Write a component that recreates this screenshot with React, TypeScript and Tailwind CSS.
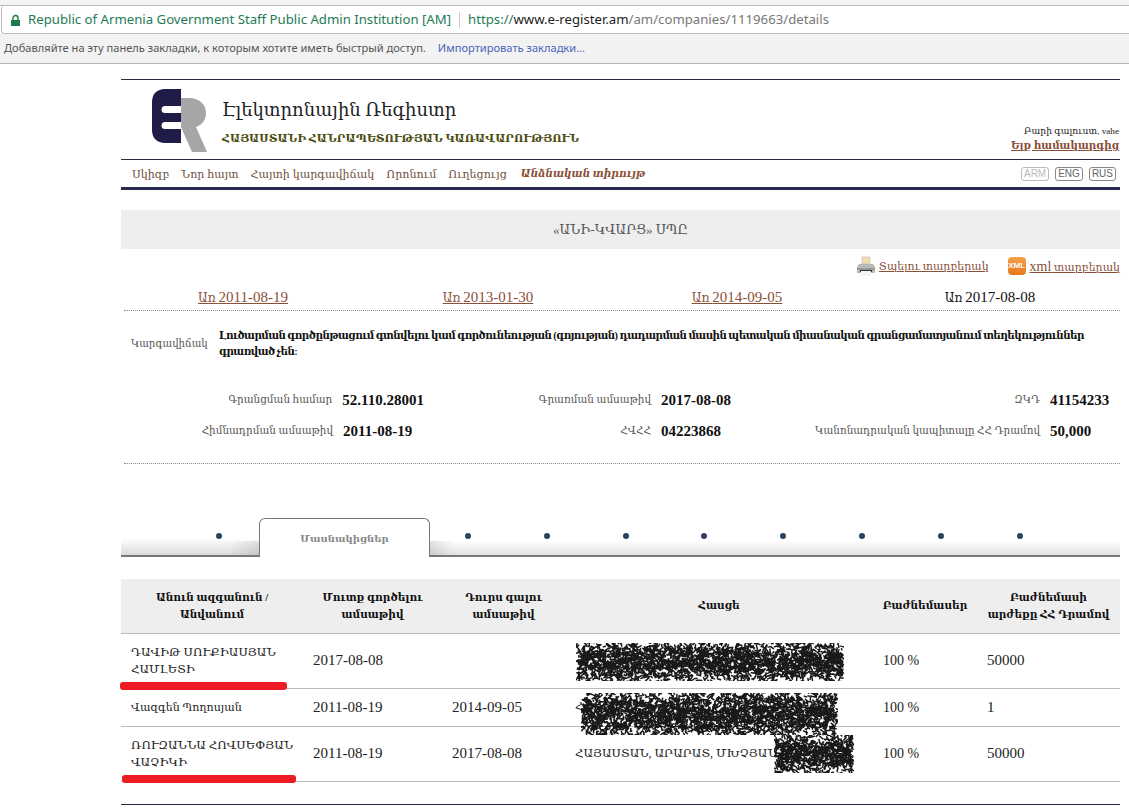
import React from "react";

const serif = "font-['Liberation_Serif','DejaVu_Serif',serif]";

function Scribble({ w, h, seed }: { w: number; h: number; seed: number }) {
  let s = seed;
  const r = () => {
    s = (s * 16807) % 2147483647;
    return s / 2147483647;
  };
  const strokes: string[] = [];
  const n = Math.round((w * h) / 3.5);
  for (let i = 0; i < n; i++) {
    const x = 1 + r() * (w - 2);
    const g = (r() + r() + r()) / 3;
    const y = h / 2 + (g - 0.5) * h * 1.7;
    const a = r() * 6.28;
    const l = 1 + r() * 4;
    strokes.push(`M${x.toFixed(1)} ${y.toFixed(1)}l${(Math.cos(a) * l).toFixed(1)} ${(Math.sin(a) * l).toFixed(1)}`);
  }
  const id = `blur${seed}`;
  return (
    <svg width={w} height={h} viewBox={`0 0 ${w} ${h}`} className="block">
      <defs>
        <filter id={id}>
          <feGaussianBlur stdDeviation="0.45" />
        </filter>
      </defs>
      <path d={strokes.join("")} filter={`url(#${id})`} stroke="#000" strokeWidth="1.5" strokeOpacity="0.9" fill="none" strokeLinecap="round" />
    </svg>
  );
}

function Logo() {
  return (
    <svg width="56" height="64" viewBox="0 0 56 64" className="block">
      <path d="M30 9h8c11 0 17 7 17 15 0 7-4 12-10 14l11 25H41L30 38z" fill="#a6a6a6" />
      <path d="M14 0h16v54H14C6 54 1 49 1 41V13C1 5 6 0 14 0z" fill="#1f1d47" />
      <path d="M14 17h16v7H14a3.500 3.500 0 0 1 0-7zM14 33h16v7H14a3.500 3.500 0 0 1 0-7z" fill="#fff" />
    </svg>
  );
}

function Printer() {
  return (
    <svg width="20" height="20" viewBox="0 0 20 20" className="block">
      <path d="M6 1h8v7H6z" fill="#f2dcae" stroke="#bbb" strokeWidth="0.6" />
      <path d="M3 8h14l2 3v6H1v-6z" fill="#b9b9b9" />
      <path d="M1 13h18" stroke="#777" />
      <path d="M4 14h12v2H4z" fill="#333" />
      <path d="M5 15h10v5H5z" fill="#f4f4f4" />
    </svg>
  );
}

function XmlIcon() {
  return (
    <div className="w-[18px] h-[18px] rounded-[4px] bg-gradient-to-b from-[#f6a04a] to-[#e8761a] flex items-center justify-center text-white text-[8px] font-bold font-['Liberation_Sans',sans-serif]">
      XML
    </div>
  );
}

const nav = ["Սկիզբ", "Նոր հայտ", "Հայտի կարգավիճակ", "Որոնում", "Ուղեցույց"];
const dots = [0, 1, 2, 3, 4, 5, 6, 7];

function Field({ label, value, labelW }: { label: string; value: string; labelW: string }) {
  return (
    <div className="flex items-center h-[20px]">
      <div className={`${labelW} text-right text-[10.400px] text-[#555] whitespace-nowrap`}>{label}</div>
      <div className="ml-[10px] text-[15px] font-bold text-[#111]">{value}</div>
    </div>
  );
}

function Rev({ date, link }: { date: string; link?: boolean }) {
  return (
    <span className={link ? "underline" : "text-[#111]"}>
      <span className="text-[12px]">Առ </span>
      <span className="text-[15px]">{date}</span>
    </span>
  );
}

export default function App() {
  return (
    <div className={`w-[1129px] h-[811px] overflow-hidden bg-white ${serif}`}>
      <div className="h-[6px] bg-[#f4f4f4] border-b border-[#bbb]" />
      <div className="h-[28px] bg-white border-b border-[#bdbdbd] ml-[1px] rounded-l-[3px] border-l flex items-center pl-[8px] pt-[1px] font-['Noto_Sans',sans-serif] text-[13.200px]">
        <svg width="11" height="13" viewBox="0 0 11 13" className="block">
          <path d="M3 6V4a2.500 2.500 0 0 1 5 0v2" fill="none" stroke="#1e7b45" strokeWidth="1.400" />
          <path d="M1 6h9v6H1z" fill="#1e7b45" />
        </svg>
        <span className="ml-[7px] text-[#1f7a56] whitespace-nowrap">Republic of Armenia Government Staff Public Admin Institution [AM]</span>
        <span className="mx-[8px] w-px h-[16px] bg-[#ccc]" />
        <span className="whitespace-nowrap text-[#777]">
          <span className="text-[#1f7a56]">https://</span>
          <span className="text-[#222]">www.e-register.am</span>/am/companies/1119663/details
        </span>
      </div>
      <div className="h-[30px] bg-[#f2f2f2] border-b border-[#b5b5b5] flex items-center pl-[4px] font-['Noto_Sans',sans-serif] text-[11.100px] text-[#555] whitespace-nowrap">
        Добавляйте на эту панель закладки, к которым хотите иметь быстрый доступ.
        <span className="ml-[12px] text-[#4a66bd]">Импортировать закладки...</span>
      </div>

      <div className="ml-[121px] w-[999px] mt-[15px]">
        <div className="h-[81px] border-y border-[#2a2a44] flex relative">
          <div className="ml-[30px] mt-[9px]">
            <Logo />
          </div>
          <div className="ml-[15px]">
            <div className="mt-[16px] text-[18px] leading-[28px] text-[#222] whitespace-nowrap">Էլեկտրոնային Ռեգիստր</div>
            <div className="mt-[6px] text-[10.800px] leading-[16px] font-bold text-[#4d4d12] whitespace-nowrap">ՀԱՅԱՍՏԱՆԻ ՀԱՆՐԱՊԵՏՈՒԹՅԱՆ ԿԱՌԱՎԱՐՈՒԹՅՈՒՆ</div>
          </div>
          <div className="ml-auto self-end text-right pb-[6px] pr-[1px]">
            <div className="text-[9.200px] leading-[14px] text-[#222]">Բարի գալուստ, vahe</div>
            <div className="text-[10.300px] leading-[15px] font-bold underline text-[#8a4f37]">Ելք համակարգից</div>
          </div>
        </div>
        <div className="h-[30px] flex items-center border-b-[3px] border-[#2a2950] pl-[11px] text-[11.100px] text-[#70503f]">
          <div className="flex gap-[12px] whitespace-nowrap pt-[2px]">
            {nav.map((n) => (
              <span key={n}>{n}</span>
            ))}
            <span className="ml-[2px] text-[10.500px] font-bold italic text-[#8a4f37]">Անձնական տիրույթ</span>
          </div>
          <div className="ml-auto flex gap-[6px] mr-[4px] font-['Liberation_Sans',sans-serif] text-[10px] leading-[12px]">
            <span className="px-[2px] border border-[#bbb] rounded-[3px] text-[#bbb]">ARM</span>
            <span className="px-[2px] border border-[#888] rounded-[3px] text-[#666]">ENG</span>
            <span className="px-[2px] border border-[#888] rounded-[3px] text-[#666]">RUS</span>
          </div>
        </div>

        <div className="mt-[20px] h-[39px] bg-[#eeeeee] flex items-center justify-center text-[13px] text-[#555]">«ԱՆԻ-ԿՎԱՐՑ» ՍՊԸ</div>

        <div className="mt-[7px] h-[20px] flex justify-end items-center gap-[19px] text-[11px] text-[#8a4f37]">
          <div className="flex items-center gap-[3px]">
            <Printer />
            <span className="underline">Տպելու տարբերակ</span>
          </div>
          <div className="flex items-center gap-[4px]">
            <XmlIcon />
            <span className="underline">
              <span className="text-[14px]">xml</span> տարբերակ
            </span>
          </div>
        </div>

        <div className="mt-[8px] h-[27px] ml-[3px] grid grid-cols-[238px_252px_246px_1fr] items-center justify-items-center border-b border-dotted border-[#888] text-[#8a4f37]">
          <Rev link date="2011-08-19" />
          <Rev link date="2013-01-30" />
          <Rev link date="2014-09-05" />
          <Rev date="2017-08-08" />
        </div>

        <div className="flex items-center mt-[17px] pl-[10px]">
          <div className="w-[88px] shrink-0 text-[10.200px] text-[#555]">Կարգավիճակ</div>
          <div className="w-[895px] shrink-0 text-[10.300px] tracking-[-0.55px] leading-[16px] font-bold text-[#111]">
            Լուծարման գործընթացում գտնվելու կամ գործունեության (գոյության) դադարման մասին պետական միասնական գրանցամատյանում տեղեկություններ գրառված չեն։
          </div>
        </div>

        <div className="mt-[30px] ml-[3px] border-b border-dotted border-[#888] grid grid-cols-[300px_310px_1fr] gap-y-[11px] h-[74px] content-start">
          <Field labelW="w-[209px]" label="Գրանցման համար" value="52.110.28001" />
          <Field labelW="w-[227px]" label="Գրառման ամսաթիվ" value="2017-08-08" />
          <Field labelW="w-[306px]" label="ԶԿԴ" value="41154233" />
          <Field labelW="w-[209px]" label="Հիմնադրման ամսաթիվ" value="2011-08-19" />
          <Field labelW="w-[227px]" label="ՀՎՀՀ" value="04223868" />
          <Field labelW="w-[306px]" label="Կանոնադրական կապիտալը ՀՀ Դրամով" value="50,000" />
        </div>

        <div className="mt-[54px] h-[39px] flex items-stretch border-b-[2px] border-[#777] relative">
          <div className="w-[138px] bg-gradient-to-b from-white from-55% to-[#dadada] flex justify-center items-center pb-[2px]">
            <span className="ml-[58px] w-[6px] h-[6px] rounded-full bg-[#2d4160]" />
          </div>
          <div className="w-[171px] h-[39px] bg-white border border-b-0 border-[#777] rounded-t-[6px] flex items-center justify-center text-[10px] font-bold text-[#888]">Մասնակիցներ</div>
          <div className="flex-1 bg-gradient-to-b from-white from-60% to-[#e2e2e2] flex items-center pl-[35px] gap-[72.800px] pb-[2px]">
            {dots.map((d) => (
              <span key={d} className="w-[6px] h-[6px] rounded-full bg-[#2d4160]" />
            ))}
          </div>
          <div className="absolute left-[108px] bottom-0 w-[30px] h-[14px] bg-gradient-to-r from-transparent to-black/10" />
          <div className="absolute left-[309px] bottom-0 w-[24px] h-[14px] bg-gradient-to-r from-black/10 to-transparent" />
        </div>

        <div className="relative mt-[22px]">
          <table className="w-[999px] table-fixed border-collapse text-[15px] text-[#222]">
            <colgroup>
              <col className="w-[182px]" />
              <col className="w-[139px]" />
              <col className="w-[123px]" />
              <col className="w-[308px]" />
              <col className="w-[104px]" />
              <col className="w-[143px]" />
            </colgroup>
            <thead>
              <tr className="h-[54px] bg-[#eeeeee] border-b border-[#bbb] text-[10.500px] leading-[17px] font-bold text-[#111]">
                <th className="px-[10px] font-bold">Անուն ազգանուն / Անվանում</th>
                <th className="px-[10px] font-bold">Մուտք գործելու ամսաթիվ</th>
                <th className="px-[10px] font-bold">Դուրս գալու ամսաթիվ</th>
                <th className="px-[10px] font-bold">Հասցե</th>
                <th className="px-[4px] font-bold">Բաժնեմասեր</th>
                <th className="px-[10px] font-bold">Բաժնեմասի արժեքը ՀՀ Դրամով</th>
              </tr>
            </thead>
            <tbody>
              <tr className="h-[55px] border-b border-[#bbb]">
                <td className="pl-[10px] text-[11.800px] leading-[17px]">ԴԱՎԻԹ ՍՈՒՔԻԱՍՅԱՆ ՀԱՄԼԵՏԻ</td>
                <td className="px-[10px]">2017-08-08</td>
                <td className="px-[10px]" />
                <td className="px-[10px]" />
                <td className="px-[10px] text-[14px]">100 %</td>
                <td className="px-[10px]">50000</td>
              </tr>
              <tr className="h-[38px] border-b border-[#bbb]">
                <td className="pl-[10px] text-[11.100px]">Վազգեն Պողոսյան</td>
                <td className="px-[10px]">2011-08-19</td>
                <td className="px-[10px]">2014-09-05</td>
                <td className="px-[10px] text-[11.800px]">Հ</td>
                <td className="px-[10px] text-[14px]">100 %</td>
                <td className="px-[10px]">1</td>
              </tr>
              <tr className="h-[55px] border-b border-[#bbb]">
                <td className="pl-[10px] text-[11.800px] leading-[17px]">ՌՈՒԶԱՆՆԱ ՀՈՎՍԵՓՅԱՆ ՎԱՉԻԿԻ</td>
                <td className="px-[10px]">2011-08-19</td>
                <td className="px-[10px]">2017-08-08</td>
                <td className="px-[10px] text-[11.800px] whitespace-nowrap overflow-hidden">ՀԱՅԱՍՏԱՆ, ԱՐԱՐԱՏ, ՄԽՉՅԱՆ,</td>
                <td className="px-[10px] text-[14px]">100 %</td>
                <td className="px-[10px]">50000</td>
              </tr>
            </tbody>
          </table>
          <div className="absolute left-[455px] top-[64px]"><Scribble w={268} h={38} seed={11} /></div>
          <div className="absolute left-[460px] top-[114px]"><Scribble w={257} h={42} seed={29} /></div>
          <div className="absolute left-[653px] top-[156px]"><Scribble w={80} h={38} seed={47} /></div>
          <div className="absolute -left-[1px] top-[103px] w-[167px] h-[8px] rounded-[3px] bg-[#ed1c24]" />
          <div className="absolute left-[1px] top-[196px] w-[174px] h-[8px] rounded-[3px] bg-[#ed1c24]" />
        </div>
        <div className="mt-[22px] h-px bg-[#2a2a44]" />
      </div>
    </div>
  );
}
